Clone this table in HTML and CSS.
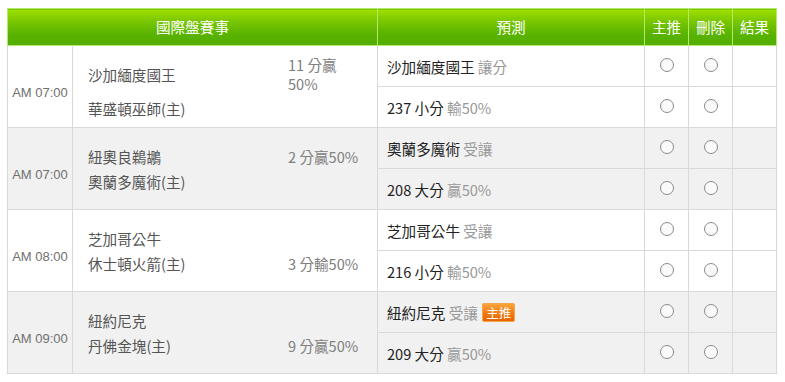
FILE: index.html
```html
<!DOCTYPE html>
<html lang="zh-Hant">
<head>
<meta charset="utf-8">
<link rel="stylesheet" href="styles.css">
</head>
<body>
<table class="board">
  <colgroup>
    <col class="c-time"><col class="c-team"><col class="c-pred"><col class="c-sm"><col class="c-sm"><col class="c-sm">
  </colgroup>
  <thead>
    <tr>
      <th colspan="2">國際盤賽事</th>
      <th>預測</th>
      <th>主推</th>
      <th>刪除</th>
      <th>結果</th>
    </tr>
  </thead>
  <tbody class="g-white">
    <tr>
      <td rowspan="2" class="time">AM 07:00</td>
      <td rowspan="2" class="teams">
        <div class="match">
          <div class="name">沙加緬度國王</div><div class="score">11 分贏 50%</div>
          <div class="name">華盛頓巫師(主)</div><div class="score"></div>
        </div>
      </td>
      <td class="pred">沙加緬度國王 <span class="sub">讓分</span></td>
      <td class="radio"><span class="dot"></span></td>
      <td class="radio"><span class="dot"></span></td>
      <td></td>
    </tr>
    <tr>
      <td class="pred">237 小分 <span class="sub">輸50%</span></td>
      <td class="radio"><span class="dot"></span></td>
      <td class="radio"><span class="dot"></span></td>
      <td></td>
    </tr>
  </tbody>
  <tbody class="g-grey">
    <tr>
      <td rowspan="2" class="time">AM 07:00</td>
      <td rowspan="2" class="teams">
        <div class="match">
          <div class="name">紐奧良鵜鶘</div><div class="score">2 分贏50%</div>
          <div class="name">奧蘭多魔術(主)</div><div class="score"></div>
        </div>
      </td>
      <td class="pred">奧蘭多魔術 <span class="sub">受讓</span></td>
      <td class="radio"><span class="dot"></span></td>
      <td class="radio"><span class="dot"></span></td>
      <td></td>
    </tr>
    <tr>
      <td class="pred">208 大分 <span class="sub">贏50%</span></td>
      <td class="radio"><span class="dot"></span></td>
      <td class="radio"><span class="dot"></span></td>
      <td></td>
    </tr>
  </tbody>
  <tbody class="g-white">
    <tr>
      <td rowspan="2" class="time">AM 08:00</td>
      <td rowspan="2" class="teams">
        <div class="match">
          <div class="name">芝加哥公牛</div><div class="score"></div>
          <div class="name">休士頓火箭(主)</div><div class="score">3 分輸50%</div>
        </div>
      </td>
      <td class="pred">芝加哥公牛 <span class="sub">受讓</span></td>
      <td class="radio"><span class="dot"></span></td>
      <td class="radio"><span class="dot"></span></td>
      <td></td>
    </tr>
    <tr>
      <td class="pred">216 小分 <span class="sub">輸50%</span></td>
      <td class="radio"><span class="dot"></span></td>
      <td class="radio"><span class="dot"></span></td>
      <td></td>
    </tr>
  </tbody>
  <tbody class="g-grey">
    <tr>
      <td rowspan="2" class="time">AM 09:00</td>
      <td rowspan="2" class="teams">
        <div class="match">
          <div class="name">紐約尼克</div><div class="score"></div>
          <div class="name">丹佛金塊(主)</div><div class="score">9 分贏50%</div>
        </div>
      </td>
      <td class="pred">紐約尼克 <span class="sub">受讓</span> <span class="badge">主推</span></td>
      <td class="radio"><span class="dot"></span></td>
      <td class="radio"><span class="dot"></span></td>
      <td></td>
    </tr>
    <tr>
      <td class="pred">209 大分 <span class="sub">贏50%</span></td>
      <td class="radio"><span class="dot"></span></td>
      <td class="radio"><span class="dot"></span></td>
      <td></td>
    </tr>
  </tbody>
</table>
</body>
</html>
```

FILE: styles.css
```css
html, body {
  margin: 0;
  padding: 0;
  background: #fff;
}
body {
  padding: 8px 0 0 7px;
  font-family: "Noto Sans CJK TC", "Noto Sans", sans-serif;
  font-size: 14.6px;
}
.board {
  border-collapse: collapse;
  table-layout: fixed;
  width: 770px;
}
.c-time { width: 65px; }
.c-team { width: 305px; }
.c-pred { width: 267px; }
.c-sm { width: 44px; }

.board th {
  height: 36px;
  padding: 0;
  color: #fff;
  font-weight: normal;
  text-align: center;
  background: linear-gradient(to bottom, #9fe000 0%, #7cc800 30%, #58b200 70%, #52ae00 100%);
  border: 1px solid #b4e870;
  line-height: 20px;
}
.board td {
  border: 1px solid #d9d9d9;
  padding: 0;
  height: 40px;
  vertical-align: middle;
}
.g-grey td { background: #f1f1f1; }
.g-white td { background: #fff; }

.board td.time {
  padding-top: 11px;
  text-align: center;
  color: #707070;
  font-family: "Liberation Sans", Arial, sans-serif;
  font-size: 13px;
}
.board td.teams {
  padding: 0 12px 0 15px;
}
.match {
  display: grid;
  grid-template-columns: 1fr 77px;
  align-items: center;
  color: #555;
  line-height: 19px;
}
.match .name, .match .score {
  padding: 3px 0;
}
.match .score {
  color: #808080;
}
.board td.pred {
  padding-left: 9px;
  color: #222;
  white-space: nowrap;
}
.sub { color: #999; }
.badge {
  display: inline-block;
  vertical-align: 1px;
  margin-left: 1px;
  padding: 0 3px;
  height: 17px;
  line-height: 17px;
  font-size: 12.5px;
  color: #fff;
  border: 1px solid #f4a64a;
  border-radius: 2px;
  background: linear-gradient(to bottom, #f9a43a 0%, #f07b14 55%, #e86400 100%);
}
.radio {
  text-align: center;
}
.dot {
  display: inline-block;
  width: 12px;
  height: 12px;
  border: 1px solid #8a8a8a;
  border-radius: 50%;
  background: #fafafa;
  vertical-align: middle;
  margin-top: -7px;
}
```
